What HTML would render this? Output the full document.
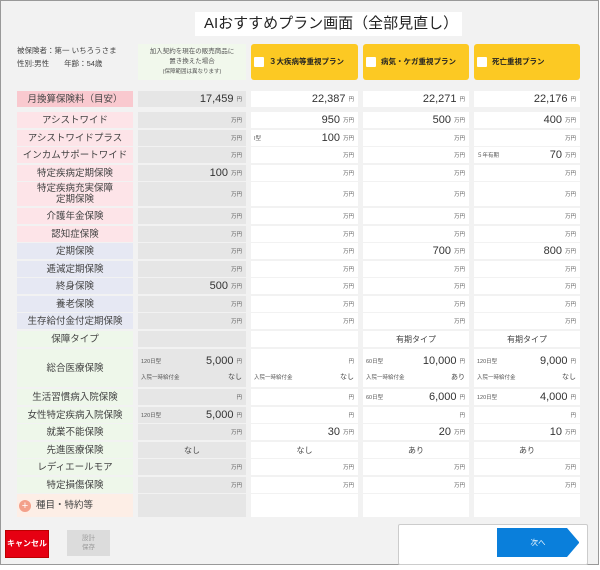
<!DOCTYPE html><html><head><meta charset="utf-8"><style>
*{margin:0;padding:0;box-sizing:border-box}
body{width:600px;height:570px;background:#fff;font-family:"Liberation Sans","Noto Sans CJK JP",sans-serif;position:relative;overflow:hidden;color:#333}
.frame{position:absolute;left:0;top:0;width:599px;height:565px;background:#f2f2f2;border:1px solid #999}
.title{position:absolute;left:195px;top:12px;width:267px;height:24px;background:#fff;font-size:15px;line-height:24px;padding-left:9px;color:#222;white-space:nowrap;overflow:hidden}
.info{position:absolute;left:17px;font-size:7.5px;color:#444}
.green{position:absolute;left:138px;top:44px;width:108px;height:36px;background:#f1f8ec;font-size:6.5px;text-align:center;line-height:10px;padding-top:3px;color:#555}
.yb{position:absolute;top:44px;height:36px;background:#fcc923;border-radius:3px;font-size:7.5px;font-weight:bold;color:#222;line-height:36px;padding-left:18px}
.yb i{position:absolute;left:3px;top:13px;width:10px;height:10px;background:#fff;border-radius:1px}
.r{position:absolute;left:17px;display:flex}
.r>div{position:relative;margin-right:5px;display:flex;align-items:center;justify-content:flex-end;padding-right:4px;font-size:11px;background:#fff}
.r>div:nth-child(1){width:116px;justify-content:center;padding:0;font-size:9.5px;color:#444;text-align:center;line-height:11px}
.r>div:nth-child(2){width:108px;background:#e6e6e6}
.r>div:nth-child(3){width:107px}
.r>div:nth-child(4){width:106px}
.r>div:nth-child(5){width:106px;margin-right:0}
.u{font-size:5.5px;margin-left:3px;color:#555}
.n{position:absolute;left:3px;font-size:5.5px;color:#555}
.p{background:#fde4e8!important}.pp{background:#f9c9cf!important}.l{background:#e6e8f3!important}.g{background:#eef7ea!important}.o{background:#fdeee6!important}
.c{justify-content:center!important;padding:0!important;font-size:8px!important;color:#444}
.s{font-size:7px;color:#444}
</style></head><body>
<div class="frame"></div>
<div class="title">AIおすすめプラン画面（全部見直し）</div>
<div class="info" style="top:45px">被保険者：第一 いちろうさま</div>
<div class="info" style="top:58px">性別:男性　　年齢：54歳</div>
<div class="green">加入契約を現在の販売商品に<br>置き換えた場合<br><span style="font-size:5.5px">(保障範囲は異なります)</span></div>
<div class="yb" style="left:251px;width:107px"><i></i>３大疾病等重視プラン</div>
<div class="yb" style="left:363px;width:106px"><i></i>病気・ケガ重視プラン</div>
<div class="yb" style="left:474px;width:106px"><i></i>死亡重視プラン</div>

<div class="r" style="top:91px;height:16px"><div class="pp">月換算保険料（目安）</div><div>17,459<span class="u">円</span></div><div>22,387<span class="u">円</span></div><div>22,271<span class="u">円</span></div><div>22,176<span class="u">円</span></div></div>
<div class="r" style="top:112px;height:16px"><div class="p">アシストワイド</div><div><span class="u">万円</span></div><div>950<span class="u">万円</span></div><div>500<span class="u">万円</span></div><div>400<span class="u">万円</span></div></div>
<div class="r" style="top:130px;height:16px"><div class="p">アシストワイドプラス</div><div><span class="u">万円</span></div><div><span class="n">I型</span>100<span class="u">万円</span></div><div><span class="u">万円</span></div><div><span class="u">万円</span></div></div>
<div class="r" style="top:147px;height:16px"><div class="p">インカムサポートワイド</div><div><span class="u">万円</span></div><div><span class="u">万円</span></div><div><span class="u">万円</span></div><div><span class="n">５年有期</span>70<span class="u">万円</span></div></div>
<div class="r" style="top:165px;height:16px"><div class="p">特定疾病定期保険</div><div>100<span class="u">万円</span></div><div><span class="u">万円</span></div><div><span class="u">万円</span></div><div><span class="u">万円</span></div></div>
<div class="r" style="top:182px;height:24px"><div class="p">特定疾病充実保障<br>定期保険</div><div><span class="u">万円</span></div><div><span class="u">万円</span></div><div><span class="u">万円</span></div><div><span class="u">万円</span></div></div>
<div class="r" style="top:208px;height:16px"><div class="p">介護年金保険</div><div><span class="u">万円</span></div><div><span class="u">万円</span></div><div><span class="u">万円</span></div><div><span class="u">万円</span></div></div>
<div class="r" style="top:226px;height:16px"><div class="p">認知症保険</div><div><span class="u">万円</span></div><div><span class="u">万円</span></div><div><span class="u">万円</span></div><div><span class="u">万円</span></div></div>
<div class="r" style="top:243px;height:16px"><div class="l">定期保険</div><div><span class="u">万円</span></div><div><span class="u">万円</span></div><div>700<span class="u">万円</span></div><div>800<span class="u">万円</span></div></div>
<div class="r" style="top:261px;height:16px"><div class="l">逓減定期保険</div><div><span class="u">万円</span></div><div><span class="u">万円</span></div><div><span class="u">万円</span></div><div><span class="u">万円</span></div></div>
<div class="r" style="top:278px;height:16px"><div class="l">終身保険</div><div>500<span class="u">万円</span></div><div><span class="u">万円</span></div><div><span class="u">万円</span></div><div><span class="u">万円</span></div></div>
<div class="r" style="top:296px;height:16px"><div class="l">養老保険</div><div><span class="u">万円</span></div><div><span class="u">万円</span></div><div><span class="u">万円</span></div><div><span class="u">万円</span></div></div>
<div class="r" style="top:313px;height:16px"><div class="l">生存給付金付定期保険</div><div><span class="u">万円</span></div><div><span class="u">万円</span></div><div><span class="u">万円</span></div><div><span class="u">万円</span></div></div>
<div class="r" style="top:331px;height:16px"><div class="g">保障タイプ</div><div></div><div></div><div class="c">有期タイプ</div><div class="c">有期タイプ</div></div>
<div class="r" style="top:349px;height:38px"><div class="g">総合医療保険</div>
<div style="flex-direction:column;align-items:stretch;justify-content:center"><div style="display:flex;justify-content:flex-end;align-items:center;height:17px"><span class="n">120日型</span>5,000<span class="u">円</span></div><div style="display:flex;justify-content:flex-end;align-items:center;height:15px"><span class="n">入院一時給付金</span><span class="s">なし</span></div></div>
<div style="flex-direction:column;align-items:stretch;justify-content:center"><div style="display:flex;justify-content:flex-end;align-items:center;height:17px"><span class="u">円</span></div><div style="display:flex;justify-content:flex-end;align-items:center;height:15px"><span class="n">入院一時給付金</span><span class="s">なし</span></div></div>
<div style="flex-direction:column;align-items:stretch;justify-content:center"><div style="display:flex;justify-content:flex-end;align-items:center;height:17px"><span class="n">60日型</span>10,000<span class="u">円</span></div><div style="display:flex;justify-content:flex-end;align-items:center;height:15px"><span class="n">入院一時給付金</span><span class="s">あり</span></div></div>
<div style="flex-direction:column;align-items:stretch;justify-content:center"><div style="display:flex;justify-content:flex-end;align-items:center;height:17px"><span class="n">120日型</span>9,000<span class="u">円</span></div><div style="display:flex;justify-content:flex-end;align-items:center;height:15px"><span class="n">入院一時給付金</span><span class="s">なし</span></div></div></div>
<div class="r" style="top:389px;height:16px"><div class="g">生活習慣病入院保険</div><div><span class="u">円</span></div><div><span class="u">円</span></div><div><span class="n">60日型</span>6,000<span class="u">円</span></div><div><span class="n">120日型</span>4,000<span class="u">円</span></div></div>
<div class="r" style="top:407px;height:16px"><div class="g">女性特定疾病入院保険</div><div><span class="n">120日型</span>5,000<span class="u">円</span></div><div><span class="u">円</span></div><div><span class="u">円</span></div><div><span class="u">円</span></div></div>
<div class="r" style="top:424px;height:16px"><div class="g">就業不能保険</div><div><span class="u">万円</span></div><div>30<span class="u">万円</span></div><div>20<span class="u">万円</span></div><div>10<span class="u">万円</span></div></div>
<div class="r" style="top:442px;height:16px"><div class="g">先進医療保険</div><div class="c" style="background:#e6e6e6">なし</div><div class="c">なし</div><div class="c">あり</div><div class="c">あり</div></div>
<div class="r" style="top:459px;height:16px"><div class="g">レディエールモア</div><div><span class="u">万円</span></div><div><span class="u">万円</span></div><div><span class="u">万円</span></div><div><span class="u">万円</span></div></div>
<div class="r" style="top:477px;height:16px"><div class="g">特定損傷保険</div><div><span class="u">万円</span></div><div><span class="u">万円</span></div><div><span class="u">万円</span></div><div><span class="u">万円</span></div></div>
<div class="r" style="top:494px;height:23px"><div class="o" style="justify-content:flex-start;padding-left:2px;font-size:9.5px"><span style="display:inline-block;width:12px;height:12px;border-radius:50%;background:#f3a08a;color:#fff;font-size:11px;line-height:12px;text-align:center;margin-right:5px">+</span>種目・特約等</div><div></div><div></div><div></div><div></div></div>

<div style="position:absolute;left:5px;top:530px;width:44px;height:28px;background:#e60012;border:1px solid #b00;color:#fff;font-size:8px;font-weight:bold;text-align:center;line-height:26px">キャンセル</div>
<div style="position:absolute;left:67px;top:530px;width:43px;height:26px;background:#dcdcdc;color:#999;font-size:6.5px;text-align:center;line-height:9px;padding-top:4px">設計<br>保存</div>
<div style="position:absolute;left:398px;top:524px;width:190px;height:41px;background:#fff;border:1px solid #ccc;border-radius:2px"></div>
<div style="position:absolute;left:497px;top:528px;width:82px;height:29px;background:#0a7fdb;color:#fff;font-size:7.5px;text-align:center;line-height:29px">次へ</div>
<svg style="position:absolute;left:565px;top:528px" width="14" height="29"><polygon points="2,0 14,0 14,14" fill="#fff"/><polygon points="2,29 14,29 14,15" fill="#fff"/></svg>
</body></html>
